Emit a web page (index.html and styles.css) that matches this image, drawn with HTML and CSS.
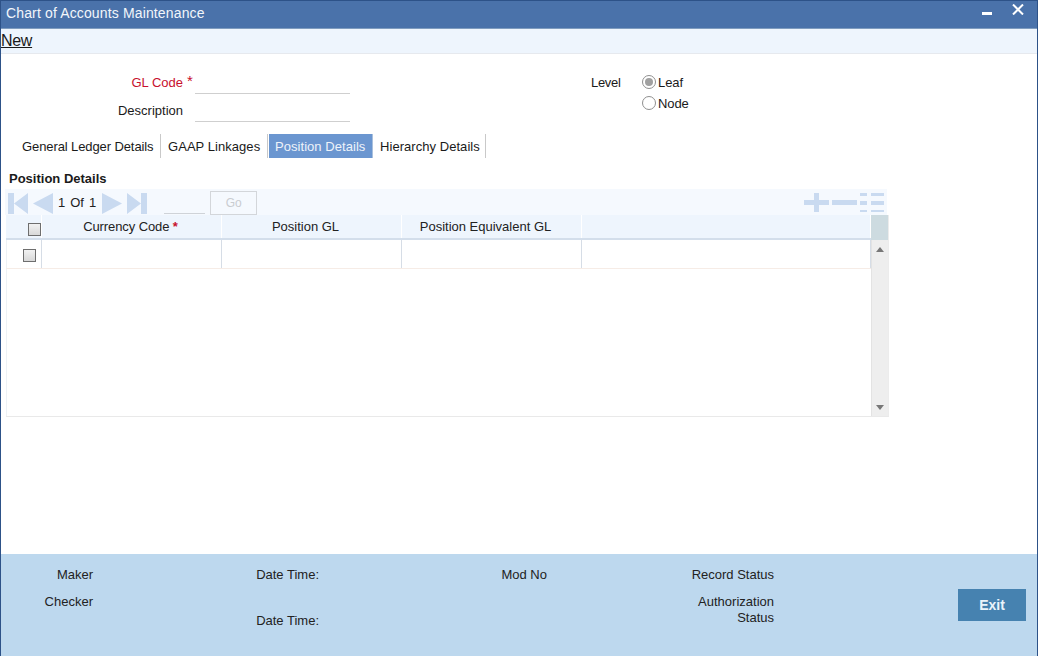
FILE: index.html
```html
<!DOCTYPE html>
<html lang="en">
<head>
<meta charset="utf-8">
<title>Chart of Accounts Maintenance</title>
<link rel="stylesheet" href="styles.css">
</head>
<body>
<div class="window">
  <header class="titlebar">
    <span class="title">Chart of Accounts Maintenance</span>
    <span class="win-controls">
      <svg class="win-min" width="10" height="3" viewBox="0 0 10 3"><rect width="10" height="3" fill="#fff"/></svg>
      <svg class="win-close" width="12" height="11" viewBox="0 0 12 11"><path d="M1 0.5 L11 10.5 M11 0.5 L1 10.5" stroke="#fff" stroke-width="2" fill="none"/></svg>
    </span>
  </header>
  <nav class="toolbar"><a class="new-link">New</a></nav>
  <main class="content">
    <section class="form-head">
      <div class="form-col">
        <div class="field-row">
          <label class="field-label req-label">GL Code</label><span class="star">*</span>
          <span class="field-input"></span>
        </div>
        <div class="field-row desc-row">
          <label class="field-label">Description</label><span class="star"></span>
          <span class="field-input"></span>
        </div>
      </div>
      <div class="level-col">
        <span class="level-label">Level</span>
        <div class="radio-list">
          <div class="radio-row"><span class="radio checked"></span><span class="radio-text">Leaf</span></div>
          <div class="radio-row"><span class="radio"></span><span class="radio-text">Node</span></div>
        </div>
      </div>
    </section>
    <ul class="tabs">
      <li class="tab tab-1">General Ledger Details</li>
      <li class="tab tab-2">GAAP Linkages</li>
      <li class="tab tab-3 active">Position Details</li>
      <li class="tab tab-4">Hierarchy Details</li>
    </ul>
    <h2 class="section-title">Position Details</h2>
    <section class="grid-wrap">
      <div class="pager">
        <svg class="pg-icon" width="20" height="21" viewBox="0 0 20 21"><path d="M0 0H6V21H0Z M20 0V21L6 10.5Z" fill="#c9daf0"/></svg>
        <svg class="pg-icon pg-prev" width="20" height="21" viewBox="0 0 20 21"><path d="M20 0V21L0 10.5Z" fill="#c9daf0"/></svg>
        <span class="pg-text">1</span><span class="pg-text">Of</span><span class="pg-text">1</span>
        <svg class="pg-icon pg-next" width="20" height="21" viewBox="0 0 20 21"><path d="M0 0V21L20 10.5Z" fill="#c9daf0"/></svg>
        <svg class="pg-icon pg-last" width="20" height="21" viewBox="0 0 20 21"><path d="M0 0L14 10.5L0 21Z M14 0H20V21H14Z" fill="#c9daf0"/></svg>
        <span class="pg-input"></span>
        <button class="go-btn">Go</button>
        <span class="pager-tools">
          <svg width="25" height="19" viewBox="0 0 25 19"><path d="M10 0H15V7H25V12H15V19H10V12H0V7H10Z" fill="#c9daf0"/></svg>
          <svg width="25" height="5" viewBox="0 0 25 5"><rect width="25" height="5" fill="#c9daf0"/></svg>
          <svg width="24" height="19" viewBox="0 0 24 19"><path d="M0 0H7V3H0Z M11 0H24V3H11Z M0 8H7V12H0Z M11 8H24V12H11Z M0 17H7V19H0Z M11 17H24V19H11Z" fill="#c9daf0"/></svg>
        </span>
      </div>
      <div class="grid-body">
        <div class="grid-table">
          <div class="grid-row head-row">
            <div class="cell cell-check"><span class="checkbox head-check"></span></div>
            <div class="cell cell-a">Currency Code <span class="cell-star">*</span></div>
            <div class="cell cell-b">Position GL</div>
            <div class="cell cell-b">Position Equivalent GL</div>
            <div class="cell cell-last"></div>
          </div>
          <div class="grid-row data-row">
            <div class="cell cell-check"><span class="checkbox"></span></div>
            <div class="cell cell-a"></div>
            <div class="cell cell-b"></div>
            <div class="cell cell-b"></div>
            <div class="cell cell-last"></div>
          </div>
        </div>
        <div class="scrollbar">
          <div class="scroll-head"></div>
          <div class="scroll-track">
            <svg width="8" height="5" viewBox="0 0 8 5"><path d="M4 0L8 5H0Z" fill="#777"/></svg>
            <svg width="8" height="5" viewBox="0 0 8 5"><path d="M0 0H8L4 5Z" fill="#777"/></svg>
          </div>
        </div>
      </div>
    </section>
  </main>
  <footer class="audit">
    <div class="audit-col col-maker">
      <span>Maker</span>
      <span>Checker</span>
    </div>
    <div class="audit-col col-date">
      <span>Date Time:</span>
      <span>Date Time:</span>
    </div>
    <div class="audit-col col-mod"><span>Mod No</span></div>
    <div class="audit-col col-status">
      <span>Record Status</span>
      <span class="auth">Authorization<br>Status</span>
    </div>
    <button class="exit-btn">Exit</button>
  </footer>
</div>
</body>
</html>
```

FILE: styles.css
```css
* { box-sizing: border-box; }
html, body { margin: 0; padding: 0; background: #fff; }
body {
  width: 1038px;
  height: 658px;
  overflow: hidden;
  font-family: "Liberation Sans", Arial, sans-serif;
  font-size: 13px;
  color: #1a1a1a;
}
.window {
  width: 1038px;
  height: 656px;
  display: flex;
  flex-direction: column;
  border-left: 1px solid #2d5288;
  border-right: 1px solid #2d5288;
  border-top: 1px solid #2d5288;
}
.titlebar {
  height: 28px;
  flex: none;
  background: #4a72aa;
  border-bottom: 1px solid #7f9cbf;
  color: #f2f6fb;
  display: flex;
  align-items: center;
  justify-content: space-between;
  padding: 0 13px 3px 5px;
}
.title { font-size: 14px; letter-spacing: 0.14px; }
.win-controls { display: flex; align-items: flex-start; gap: 20px; height: 100%; }
.win-min { margin-top: 11px; }
.win-close { margin-top: 3px; }
.toolbar {
  height: 25px;
  flex: none;
  background: #eef5fd;
  border-bottom: 1px solid #e6e9ee;
  font-size: 16px;
  letter-spacing: -0.3px;
  line-height: 23px;
}
.new-link { color: #1a1a1a; text-decoration: underline; }
.content { flex: 1; min-height: 0; display: flex; flex-direction: column; background: #fff; }
.form-head { display: flex; height: 70px; padding-top: 18px; }
.form-col { width: 590px; }
.field-row { display: flex; align-items: flex-start; height: 22px; }
.desc-row { margin-top: 6px; }
.field-label { width: 182px; text-align: right; line-height: 21px; }
.req-label { color: #c8102e; }
.star { width: 12px; color: #c8102e; font-size: 15px; line-height: 17px; padding-left: 4px; }
.field-input { width: 155px; height: 22px; border-bottom: 1px solid #cfcfcf; }
.level-col { display: flex; }
.level-label { width: 51px; line-height: 21px; letter-spacing: -0.3px; }
.radio-list { display: flex; flex-direction: column; margin-top: -1px; }
.radio-row { display: flex; align-items: center; gap: 2px; height: 21px; }
.radio-text { padding-top: 2px; letter-spacing: -0.1px; }
.radio {
  width: 14px; height: 14px; border-radius: 50%;
  border: 1px solid #8f8f8f;
  background: #fff;
  position: relative;
}
.radio.checked::after {
  content: "";
  position: absolute;
  inset: 2px;
  border-radius: 50%;
  background: #a0a0a0;
}
.tabs { list-style: none; margin: 10px 0 0; padding: 0 0 0 21px; display: flex; height: 24px; }
.tab {
  height: 24px;
  line-height: 25px;
  letter-spacing: 0.05px;
  border-right: 1px solid #c9c9c9;
  white-space: nowrap;
}
.tab-1 { width: 139px; letter-spacing: -0.1px; }
.tab-2 { width: 107px; padding-left: 7px; }
.tab-3 { width: 104px; padding-left: 6px; margin-left: 1px; }
.tab-4 { width: 113px; padding-left: 7px; }
.tab.active { background: #6b96d0; color: #eef3fa; border-right: 1px solid #a9c0dd; }
.section-title { margin: 12px 0 0 8px; font-size: 13px; font-weight: bold; line-height: 18px; height: 16px; }
.grid-wrap { margin: 3px 0 0 4px; width: 884px; }
.pager {
  height: 26px;
  width: 882px;
  background: #f5f9fe;
  display: flex;
  align-items: center;
  padding-left: 3px;
}
.pg-icon { flex: none; margin-top: 3px; }
.pg-prev { margin-left: 5px; }
.pg-text { color: #222; margin-left: 5px; }
.pg-next { margin-left: 6px; }
.pg-last { margin-left: 5px; }
.pg-input { width: 41px; height: 25px; margin-left: 17px; border-bottom: 1px solid #cfd3d8; align-self: flex-start; }
.go-btn {
  width: 47px;
  height: 24px;
  margin: 2px 0 0 5px;
  background: #f5f9fe;
  border: 1px solid #d3d6da;
  color: #c9ccd0;
  font: 12px "Liberation Sans", Arial, sans-serif;
  padding: 0;
  align-self: flex-start;
}
.pager-tools {
  display: flex;
  align-items: center;
  gap: 3px;
  margin-left: auto;
  padding: 0 3px 0 0;
  height: 100%;
}
.grid-body {
  display: flex;
  height: 202px;
  margin-left: 1px;
  border-bottom: 1px solid #e9e9e9;
  border-right: 1px solid #ececec;
}
.grid-table { width: 865px; flex: none; box-shadow: inset 1px 0 #edf1f5; }
.grid-row { display: flex; }
.head-row { height: 25px; background: #eef5fd; border-bottom: 2px solid #d3deeb; }
.data-row { height: 29px; border-bottom: 1px solid #f6ece6; }
.cell {
  border-right: 1px solid #d6dde6;
  text-align: center;
  line-height: 24px;
  color: #222;
}
.head-row .cell { border-right: 1px solid #fff; }
.cell-check { width: 36px; position: relative; }
.cell-a { width: 180px; padding-right: 2px; letter-spacing: -0.1px; }
.cell-b { width: 180px; padding-right: 12px; }
.cell-last { width: 289px; }
.cell-star { color: #c8102e; font-weight: bold; }
.checkbox {
  position: absolute;
  left: 17px; top: 9px;
  width: 13px; height: 13px;
  border: 1px solid #6e6e6e;
  background: linear-gradient(#f2f2f2, #d8d8d8);
}
.head-check { left: 22px; top: 8px; }
.scrollbar { width: 17px; flex: none; display: flex; flex-direction: column; }
.scroll-head { height: 25px; background: #cddbe0; }
.scroll-track {
  flex: 1;
  background: #eeeeee;
  border-left: 1px solid #e3e3e3;
  display: flex;
  flex-direction: column;
  justify-content: space-between;
  align-items: center;
  padding: 7px 0 6px;
}
.audit {
  height: 102px;
  flex: none;
  background: #bdd8ee;
  position: relative;
  display: flex;
  color: #222;
}
.audit-col { display: flex; flex-direction: column; }
.col-maker { width: 92px; text-align: right; padding-top: 13px; gap: 12px; }
.col-date { width: 226px; text-align: right; padding-top: 13px; gap: 31px; }
.col-mod { width: 228px; text-align: right; padding-top: 13px; }
.col-status { width: 227px; text-align: right; padding-top: 13px; gap: 12px; }
.auth { line-height: 16px; }
.exit-btn {
  position: absolute;
  left: 957px;
  top: 35px;
  width: 68px;
  height: 32px;
  background: #4682b0;
  border: 0;
  color: #eaf4fb;
  font: bold 14px "Liberation Sans", Arial, sans-serif;
  padding: 0;
}
```
